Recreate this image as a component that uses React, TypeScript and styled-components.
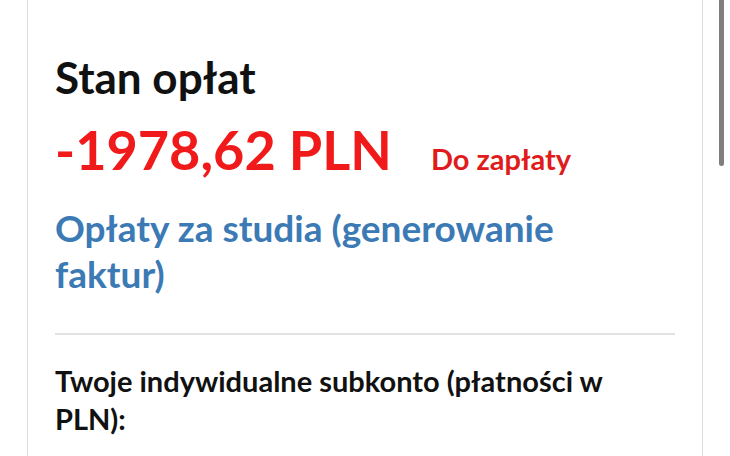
import React from 'react';
import styled, {createGlobalStyle} from "styled-components";

const GlobalStyle = createGlobalStyle`
  html, body {
    margin: 0;
    padding: 0;
    background: #fff;
    overflow: hidden;
  }
  body {
    font-family: Lato, "Noto Sans", sans-serif;
    color: #111;
  }
`;

const App = () => {
  return (
    <>
      <GlobalStyle/>
      <Page>
        <Card>
          <Title>Stan opłat</Title>
          <BalanceRow>
            <Amount>-1978,62 PLN</Amount>
            <Status>Do zapłaty</Status>
          </BalanceRow>
          <FeesLink href="#">Opłaty za studia (generowanie faktur)</FeesLink>
          <Divider/>
          <Subtitle>Twoje indywidualne subkonto (płatności w PLN):</Subtitle>
        </Card>
      </Page>
      <ScrollThumb/>
    </>
  );
};

const Page = styled.div`
  height: 456px;
  padding-left: 27px;
  width: 676px;
`;
const Card = styled.div`
  box-sizing: border-box;
  height: 100%;
  border-left: 1px solid #dcdcdc;
  border-right: 1px solid #dcdcdc;
  padding: 51px 27px 0 27px;
  display: flex;
  flex-direction: column;
`;
const Title = styled.h2`
  margin: 0;
  font-weight: 700;
  font-size: 44px;
  line-height: 52px;
  color: #111;
`;
const BalanceRow = styled.div`
  display: flex;
  align-items: baseline;
  gap: 39px;
  margin-top: 17px;
`;
const Amount = styled.span`
  font-weight: 700;
  font-size: 54px;
  line-height: 60px;
  color: #f01a1a;
`;
const Status = styled.span`
  font-weight: 700;
  font-size: 29px;
  color: #e01b1b;
`;
const FeesLink = styled.a`
  display: block;
  max-width: 540px;
  margin-top: 25px;
  font-weight: 700;
  font-size: 37px;
  line-height: 46px;
  color: #3b7ab5;
  text-decoration: none;
`;
const Divider = styled.hr`
  width: 100%;
  margin: 36px 0 0 0;
  border: none;
  border-top: 2px solid #e2e2e2;
`;
const Subtitle = styled.p`
  margin: 27px 0 0 0;
  font-weight: 700;
  font-size: 29px;
  line-height: 38px;
  color: #111;
`;
const ScrollThumb = styled.div`
  position: fixed;
  top: 0;
  left: 719px;
  width: 5px;
  height: 166px;
  border-radius: 0 0 3px 3px;
  background: #7f7f7f;
`;

export default App;
